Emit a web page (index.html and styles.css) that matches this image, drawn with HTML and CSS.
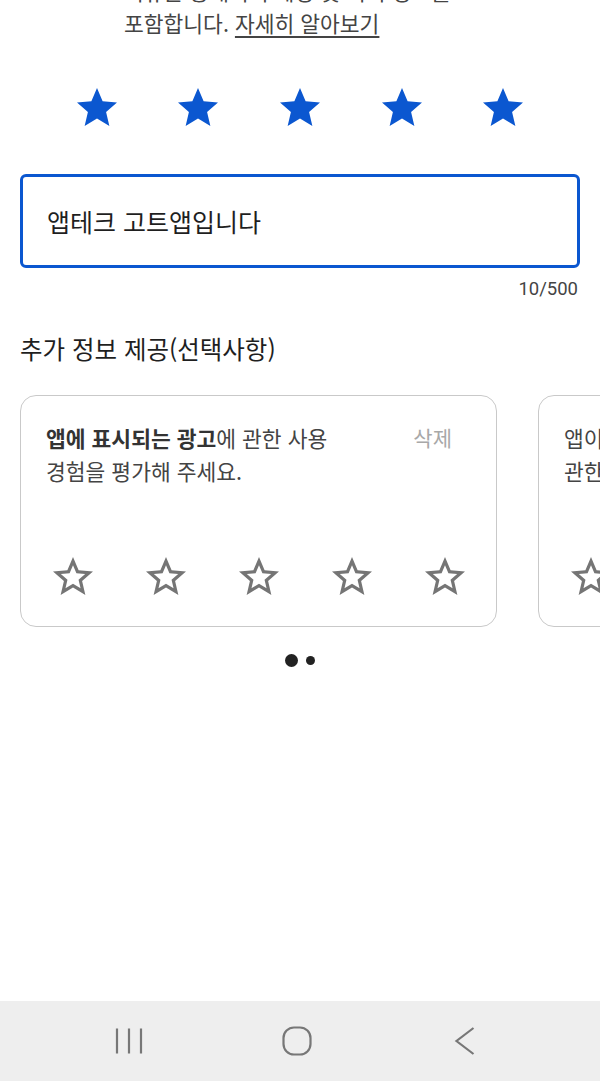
FILE: index.html
```html
<!DOCTYPE html>
<html lang="ko">

<head>
  <title>리뷰 작성</title>
  <meta charset="UTF-8">
  <link rel="stylesheet" href="styles.css">
</head>

<body>
  <div class="screen">
    <div class="content">
      <div class="intro">
        <p>리뷰는 공개되며 계정 및 기기 정보를</p>
        <p>포함합니다. <a class="learnMore" href="#">자세히 알아보기</a></p>
      </div>

      <div class="rating">
        <svg viewBox="0 0 24 24"><path d="M12 17.27L18.18 21l-1.64-7.03L22 9.24l-7.19-.61L12 2 9.19 8.63 2 9.24l5.46 4.73L5.82 21z"/></svg>
        <svg viewBox="0 0 24 24"><path d="M12 17.27L18.18 21l-1.64-7.03L22 9.24l-7.19-.61L12 2 9.19 8.63 2 9.24l5.46 4.73L5.82 21z"/></svg>
        <svg viewBox="0 0 24 24"><path d="M12 17.27L18.18 21l-1.64-7.03L22 9.24l-7.19-.61L12 2 9.19 8.63 2 9.24l5.46 4.73L5.82 21z"/></svg>
        <svg viewBox="0 0 24 24"><path d="M12 17.27L18.18 21l-1.64-7.03L22 9.24l-7.19-.61L12 2 9.19 8.63 2 9.24l5.46 4.73L5.82 21z"/></svg>
        <svg viewBox="0 0 24 24"><path d="M12 17.27L18.18 21l-1.64-7.03L22 9.24l-7.19-.61L12 2 9.19 8.63 2 9.24l5.46 4.73L5.82 21z"/></svg>
      </div>

      <div class="reviewBox">앱테크 고트앱입니다</div>
      <div class="counter">10/500</div>

      <h2 class="extraTitle">추가 정보 제공(선택사항)</h2>

      <div class="carousel">
        <div class="card">
          <div class="cardTop">
            <p class="question"><b>앱에 표시되는 광고</b>에 관한 사용<br>경험을 평가해 주세요.</p>
            <span class="remove">삭제</span>
          </div>
          <div class="smallStars">
            <svg viewBox="0 0 24 24"><path d="M22 9.24l-7.19-.62L12 2 9.19 8.63 2 9.24l5.46 4.73L5.82 21 12 17.27 18.18 21l-1.63-7.03L22 9.24zM12 15.4l-3.760 2.27 1-4.28-3.32-2.88 4.38-.38L12 6.1l1.71 4.04 4.38.38-3.32 2.88 1 4.28L12 15.4z"/></svg>
            <svg viewBox="0 0 24 24"><path d="M22 9.24l-7.19-.62L12 2 9.19 8.63 2 9.24l5.46 4.73L5.82 21 12 17.27 18.18 21l-1.63-7.03L22 9.24zM12 15.4l-3.76 2.27 1-4.28-3.32-2.88 4.38-.38L12 6.1l1.71 4.04 4.38.38-3.32 2.88 1 4.28L12 15.4z"/></svg>
            <svg viewBox="0 0 24 24"><path d="M22 9.24l-7.19-.62L12 2 9.19 8.63 2 9.24l5.46 4.73L5.82 21 12 17.27 18.18 21l-1.63-7.03L22 9.24zM12 15.4l-3.76 2.27 1-4.28-3.32-2.88 4.38-.38L12 6.1l1.71 4.04 4.38.38-3.32 2.88 1 4.28L12 15.4z"/></svg>
            <svg viewBox="0 0 24 24"><path d="M22 9.24l-7.19-.62L12 2 9.19 8.63 2 9.24l5.46 4.73L5.82 21 12 17.27 18.18 21l-1.63-7.03L22 9.24zM12 15.4l-3.76 2.27 1-4.28-3.32-2.88 4.38-.38L12 6.1l1.71 4.04 4.38.38-3.32 2.88 1 4.28L12 15.4z"/></svg>
            <svg viewBox="0 0 24 24"><path d="M22 9.24l-7.19-.62L12 2 9.19 8.63 2 9.24l5.46 4.73L5.82 21 12 17.27 18.18 21l-1.63-7.03L22 9.24zM12 15.4l-3.76 2.27 1-4.28-3.32-2.88 4.38-.38L12 6.1l1.71 4.04 4.38.38-3.32 2.88 1 4.28L12 15.4z"/></svg>
          </div>
        </div>
        <div class="card">
          <div class="cardTop">
            <p class="question">앱이 안정적으로 작동하는지에<br>관한 사용 경험을 평가해 주세요.</p>
          </div>
          <div class="smallStars">
            <svg viewBox="0 0 24 24"><path d="M22 9.24l-7.19-.62L12 2 9.19 8.63 2 9.24l5.46 4.73L5.82 21 12 17.27 18.18 21l-1.63-7.03L22 9.24zM12 15.4l-3.76 2.27 1-4.28-3.32-2.88 4.38-.38L12 6.1l1.71 4.04 4.38.38-3.32 2.88 1 4.28L12 15.4z"/></svg>
            <svg viewBox="0 0 24 24"><path d="M22 9.24l-7.19-.62L12 2 9.19 8.63 2 9.24l5.46 4.73L5.82 21 12 17.27 18.18 21l-1.63-7.03L22 9.24zM12 15.4l-3.76 2.27 1-4.28-3.32-2.88 4.38-.38L12 6.1l1.71 4.04 4.38.38-3.32 2.88 1 4.28L12 15.4z"/></svg>
            <svg viewBox="0 0 24 24"><path d="M22 9.24l-7.19-.62L12 2 9.19 8.63 2 9.24l5.46 4.73L5.82 21 12 17.27 18.18 21l-1.63-7.03L22 9.24zM12 15.4l-3.76 2.27 1-4.28-3.32-2.88 4.38-.38L12 6.1l1.71 4.04 4.38.38-3.32 2.88 1 4.28L12 15.4z"/></svg>
            <svg viewBox="0 0 24 24"><path d="M22 9.24l-7.19-.62L12 2 9.19 8.63 2 9.24l5.46 4.73L5.82 21 12 17.27 18.18 21l-1.63-7.03L22 9.24zM12 15.4l-3.76 2.27 1-4.28-3.32-2.88 4.38-.38L12 6.1l1.71 4.04 4.38.38-3.32 2.88 1 4.28L12 15.4z"/></svg>
            <svg viewBox="0 0 24 24"><path d="M22 9.24l-7.19-.62L12 2 9.19 8.63 2 9.24l5.46 4.73L5.82 21 12 17.27 18.18 21l-1.63-7.03L22 9.24zM12 15.4l-3.76 2.27 1-4.28-3.32-2.88 4.38-.38L12 6.1l1.71 4.04 4.38.38-3.32 2.88 1 4.28L12 15.4z"/></svg>
          </div>
        </div>
      </div>

      <div class="dots">
        <span class="dot active"></span>
        <span class="dot"></span>
      </div>
    </div>

    <div class="navBar">
      <svg class="navIcon" viewBox="0 0 40 40"><path d="M8 7.5v25M20 7.5v25M32 7.5v25"/></svg>
      <svg class="navIcon" viewBox="0 0 40 40"><rect x="6.5" y="6.5" width="27" height="27" rx="10.5"/></svg>
      <svg class="navIcon" viewBox="0 0 40 40"><path d="M28.5 7L11.5 20l17 13"/></svg>
    </div>
  </div>
</body>

</html>
```

FILE: styles.css
```css
html, body {
  margin: 0;
  padding: 0;
  background-color: #ffffff;
}
body {
  font-family: "Noto Sans CJK KR", "Noto Sans", sans-serif;
  color: #222222;
  overflow: hidden;
}
.screen {
  display: flex;
  flex-direction: column;
  height: 100vh;
}
.content {
  flex: 1;
  overflow: hidden;
}
.intro {
  margin-top: -25px;
  padding-left: 124px;
  font-size: 21.5px;
  line-height: 32px;
  color: #444444;
}
.intro p {
  margin: 0;
}
.learnMore {
  color: #444444;
  text-decoration: underline;
  text-underline-offset: 4px;
  text-decoration-thickness: 1.5px;
}
.rating {
  display: grid;
  grid-template-columns: repeat(5, 1fr);
  justify-items: center;
  margin: 45px 46px 0 46px;
}
.rating svg {
  width: 48px;
  height: 48px;
  fill: #0b57d0;
  display: block;
}
.reviewBox {
  margin: 42px 20px 0 20px;
  height: 88px;
  border: 3px solid #0b57d0;
  border-radius: 6px;
  padding-left: 24px;
  display: flex;
  align-items: center;
  font-size: 25px;
  color: #1f1f1f;
}
.counter {
  margin: 11px 22px 0 0;
  text-align: right;
  font-family: Roboto, sans-serif;
  font-size: 18.5px;
  line-height: 20px;
  color: #444444;
}
.extraTitle {
  margin: 35px 0 0 20px;
  font-size: 24.5px;
  line-height: 30px;
  font-weight: normal;
  color: #1f1f1f;
}
.carousel {
  display: flex;
  gap: 41px;
  margin-top: 31px;
  padding-left: 20px;
  overflow: hidden;
}
.card {
  flex: 0 0 477px;
  box-sizing: border-box;
  height: 232px;
  border: 1.5px solid #c9c9c9;
  border-radius: 16px;
  padding: 25px 5px 25px 5px;
  display: flex;
  flex-direction: column;
  justify-content: space-between;
}
.cardTop {
  display: flex;
  justify-content: space-between;
  padding: 0 39px 0 20px;
}
.question {
  margin: 0;
  font-size: 21.5px;
  line-height: 33px;
  color: #444444;
  white-space: nowrap;
}
.question b {
  color: #333333;
}
.remove {
  font-size: 21px;
  line-height: 33px;
  color: #a8a8a8;
}
.smallStars {
  display: grid;
  grid-template-columns: repeat(5, 1fr);
  justify-items: center;
}
.smallStars svg {
  width: 48px;
  height: 48px;
  fill: #757575;
  display: block;
}
.dots {
  display: flex;
  justify-content: center;
  align-items: center;
  gap: 8px;
  margin-top: 27px;
}
.dot {
  width: 9px;
  height: 9px;
  border-radius: 50%;
  background-color: #222222;
}
.dot.active {
  width: 13px;
  height: 13px;
}
.navBar {
  height: 80px;
  background-color: #eeeeee;
  display: flex;
  justify-content: center;
  align-items: center;
  gap: 128px;
  padding-right: 6px;
}
.navIcon {
  width: 40px;
  height: 40px;
  fill: none;
  stroke: #777777;
  stroke-width: 2.2;
}
```
